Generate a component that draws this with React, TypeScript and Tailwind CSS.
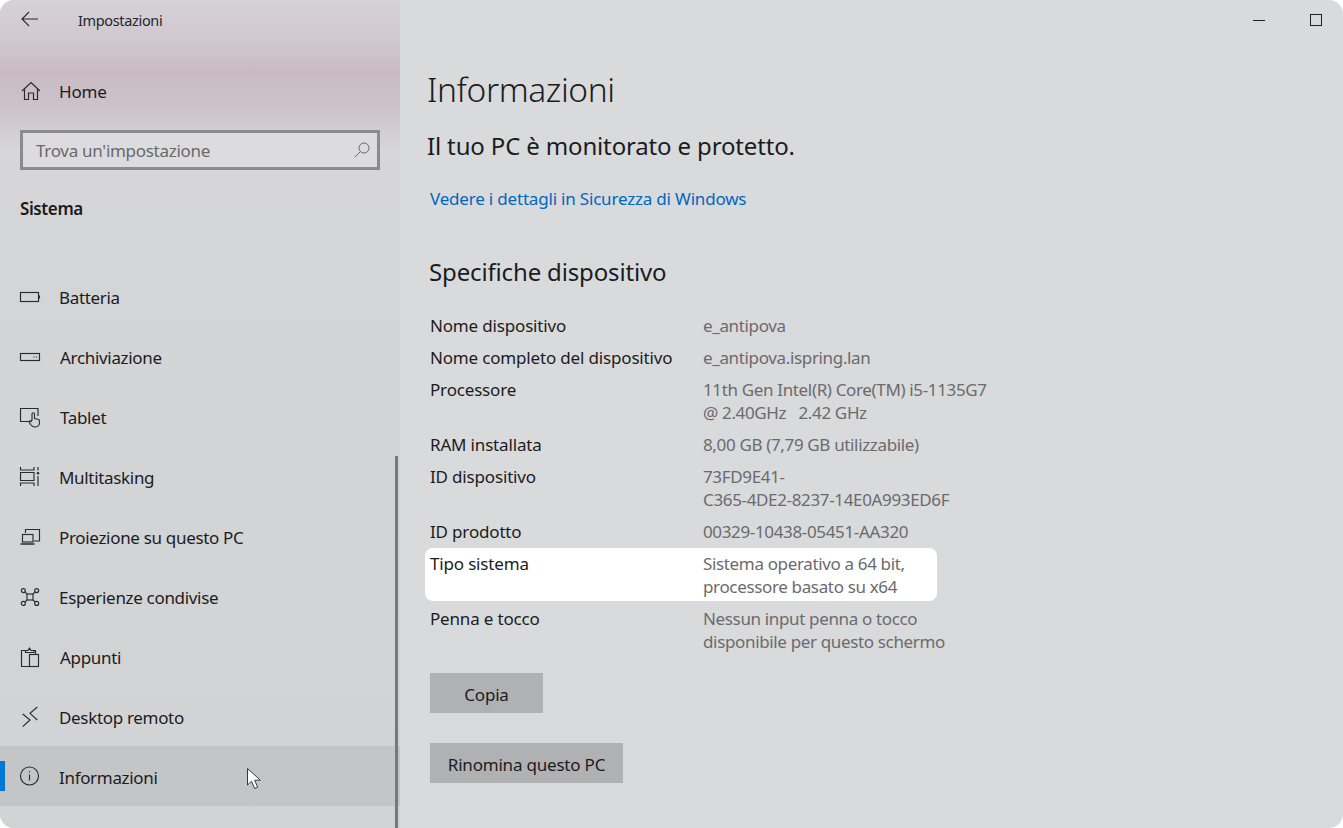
import React from "react";

const S = ({ children, w = 20, h = 20 }: { children: React.ReactNode; w?: number; h?: number }) => (
  <svg width={w} height={h} viewBox={`0 0 ${w} ${h}`} fill="none" stroke="#2b2b2d" strokeWidth="1.15" className="shrink-0 overflow-visible">
    {children}
  </svg>
);

const nav: { label: string; shift?: boolean; icon: React.ReactNode }[] = [
  { label: "Batteria", icon: <S><rect x="0.5" y="5.5" width="18" height="9" /><path d="M19.3 8.5v3" strokeWidth="1.5" /></S> },
  { label: "Archiviazione", shift: true, icon: <S><rect x="0.5" y="6.5" width="19" height="7" /><path d="M13.5 10h1.2M16 10h1.2" /></S> },
  { label: "Tablet", shift: true, icon: <S><path d="M9 14.5H0.5V1.5H18V9" /><path d="M12 13V7a1.2 1.2 0 0 1 2.5 0v4.5l3.5.7c1 .2 1.5 1 1.5 2v1.5c0 2.5-2 4.3-4.5 4.3s-3.5-1-4.5-2.5l-1.5-3c.6-.8 1.6-.8 2.2 0z" /></S> },
  { label: "Multitasking", icon: <S><path d="M0.5 0V3H14V0M0.5 19V16H14V19M0.5 5.5H14V13.5H0.5z" /><path d="M18 0v3.5M18 9v10" /><circle cx="18" cy="6.3" r="1.3" fill="#2b2b2d" stroke="none" /></S> },
  { label: "Proiezione su questo PC", icon: <S><path d="M5.5 6V2.5H19.5V14H14" /><rect x="2.5" y="7.5" width="10.5" height="7.5" /><path d="M0.5 17H14.5" strokeWidth="1.5" /></S> },
  { label: "Esperienze condivise", icon: <S><rect x="7" y="7" width="6" height="6" /><circle cx="3.3" cy="3.6" r="2" /><circle cx="16.7" cy="3.6" r="2" /><circle cx="3.3" cy="16.4" r="2" /><circle cx="16.7" cy="16.4" r="2" /><path d="M4.8 5l2.4 2.2M15.2 5l-2.4 2.2M4.8 15l2.4-2.2M15.2 15l-2.4-2.2" /></S> },
  { label: "Appunti", shift: true, icon: <S><path d="M9 19.5H1.5V3.5H5.5M14 3.5H15.5V7.5" /><path d="M5.5 5.5V3.5H8l1.5-2.5L11 3.5H14V5.5z" /><rect x="9.5" y="7.5" width="9" height="12" /></S> },
  { label: "Desktop remoto", icon: <S><path d="M2.7 7L10 13l-7.3 6.7" /><path d="M17.3 0L10 6.3 17.3 13" /></S> },
];

function NavRow({ label, icon, active, shift }: { label: string; icon: React.ReactNode; active?: boolean; shift?: boolean }) {
  return (
    <div className={`relative flex h-[60px] items-center pl-5 ${active ? "bg-[#c4c5c7]" : ""}`}>
      {active && <div className="absolute left-0 top-[15px] h-[30px] w-[5px] bg-[#0078d4]" />}
      <div className="mt-[2px] flex w-[39px]">{icon}</div>
      <span className={`mt-[3px] text-[17px] tracking-[-0.32px] text-[#1c1c1e] ${shift ? "ml-[1px]" : ""}`}>{label}</span>
    </div>
  );
}

const specs: { k: string; v: string[]; hi?: boolean }[] = [
  { k: "Nome dispositivo", v: ["e_antipova"] },
  { k: "Nome completo del dispositivo", v: ["e_antipova.ispring.lan"] },
  { k: "Processore", v: ["11th Gen Intel(R) Core(TM) i5-1135G7", "@ 2.40GHz   2.42 GHz"] },
  { k: "RAM installata", v: ["8,00 GB (7,79 GB utilizzabile)"] },
  { k: "ID dispositivo", v: ["73FD9E41-", "C365-4DE2-8237-14E0A993ED6F"] },
  { k: "ID prodotto", v: ["00329-10438-05451-AA320"] },
  { k: "Tipo sistema", v: ["Sistema operativo a 64 bit,", "processore basato su x64"], hi: true },
  { k: "Penna e tocco", v: ["Nessun input penna o tocco", "disponibile per questo schermo"] },
];

export default function App() {
  return (
    <div className="h-[828px] w-[1343px] overflow-hidden bg-white font-['Noto_Sans',sans-serif]">
      <div className="flex h-full w-full overflow-hidden rounded-[14px] bg-[#d9dadc]">
        {/* Sidebar */}
        <aside className="relative flex w-[400px] shrink-0 flex-col bg-[linear-gradient(180deg,#d5d3d7_0px,#d0c8cf_40px,#c8bbc4_72px,#cdc2ca_105px,#d7d6da_150px,#d4d5d7_230px,#d2d3d5_828px)]">
          <div className="flex h-[41px] items-center pl-[21px]">
            <svg width="18" height="16" viewBox="0 0 18 16" fill="none" stroke="#2b2b2d" strokeWidth="1.1" className="-mt-[3px]">
              <path d="M8 1L1 8l7 7M1 8h16" />
            </svg>
            <span className="ml-[39px] text-[14.5px] tracking-[-0.35px] text-[#26262a]">Impostazioni</span>
          </div>
          <div className="mt-[20px] flex h-[60px] items-center pl-[21px]">
            <svg width="20" height="20" viewBox="0 0 20 20" fill="none" stroke="#2b2b2d" strokeWidth="1.2" className="-mt-[1px]">
              <path d="M1 10L10 1.5 19 10M3.5 8v10.5h4V12h5v6.5h4V8" />
            </svg>
            <span className="ml-[18px] mt-[2px] text-[17px] tracking-[-0.2px] text-[#1c1c1e]">Home</span>
          </div>
          <div className="mx-5 mt-[9px] flex h-10 items-center justify-between border-[3px] border-[#8b8b8d] bg-[#dcdcde] pl-[13px] pr-[7px]">
            <span className="mt-[2px] text-[17px] tracking-[-0.29px] text-[#69696b]">Trova un'impostazione</span>
            <svg width="16" height="16" viewBox="0 0 16 16" fill="none" stroke="#6a6a6c" strokeWidth="1">
              <circle cx="10" cy="6" r="5" />
              <path d="M6.3 9.7L0.8 15.2" />
            </svg>
          </div>
          <div className="mt-[26px] pl-5 text-[17px] font-semibold leading-[26px] tracking-[-0.4px] text-[#1b1b1d]">Sistema</div>
          <nav className="mt-[44px]">
            {nav.map((n) => (
              <NavRow key={n.label} label={n.label} icon={n.icon} shift={n.shift} />
            ))}
            <NavRow
              active
              label="Informazioni"
              icon={
                <S>
                  <circle cx="9.5" cy="9" r="9" />
                  <path d="M9.5 7.5v6M9.5 4.2v1.4" />
                </S>
              }
            />
          </nav>
          {/* scrollbar */}
          <div className="absolute bottom-0 left-[395px] top-[456px] w-[2.5px] bg-[#77787a]" />
          {/* cursor */}
          <svg width="17" height="23" viewBox="0 0 17 23" className="absolute left-[247px] top-[768px]">
            <path d="M0.5 0.5V17l4-3.7 3.2 7.2 3-1.3-3.1-7h5.7z" fill="#fff" stroke="#3a3a3a" strokeWidth="1" />
          </svg>
        </aside>

        {/* Main */}
        <main className="relative flex-1 pl-[27px]">
          <div className="absolute right-[21px] top-[14px] flex items-center gap-[45px]">
            <div className="h-px w-3 bg-[#1f1f21]" />
            <div className="h-3 w-3 border border-[#1f1f21]" />
          </div>
          <h1 className="mt-[64px] text-[33.5px] font-light leading-[50px] tracking-[-0.4px] text-[#1c1c1e]">Informazioni</h1>
          <p className="mt-[15px] text-[24px] leading-[34px] tracking-[-0.15px] text-[#1c1c1e]">Il tuo PC è monitorato e protetto.</p>
          <a className="ml-[3px] mt-[23px] block text-[17px] leading-[26px] tracking-[-0.19px] text-[#0067c0]">Vedere i dettagli in Sicurezza di Windows</a>
          <h2 className="ml-[2px] mt-[43px] text-[24px] leading-[34px] tracking-[-0.15px] text-[#1c1c1e]">Specifiche dispositivo</h2>
          <div className="mt-[25px] w-[560px] pl-[3px]">
            {specs.map((s) => (
              <div key={s.k} className="relative flex pb-[8.25px] text-[17px] leading-[23.5px]">
                {s.hi && <div className="absolute -left-[5px] -top-[4px] h-[53px] w-[512px] rounded-[8px] bg-white" />}
                <div className="relative w-[273px] shrink-0 tracking-[-0.17px] text-[#1c1c1e]">{s.k}</div>
                <div className="relative whitespace-pre tracking-[-0.35px] text-[#6b6b6d]">
                  {s.v.map((l) => (
                    <div key={l}>{l}</div>
                  ))}
                </div>
              </div>
            ))}
          </div>
          <button className="ml-[3px] mt-[11px] block h-10 w-[113px] bg-[#b0b1b3] pt-[3px] text-[17px] tracking-[-0.2px] text-[#1c1c1e]">Copia</button>
          <button className="ml-[3px] mt-[30px] block h-10 w-[193px] bg-[#b0b1b3] pt-[3px] text-[17px] tracking-[-0.2px] text-[#1c1c1e]">Rinomina questo PC</button>
        </main>
      </div>
    </div>
  );
}
